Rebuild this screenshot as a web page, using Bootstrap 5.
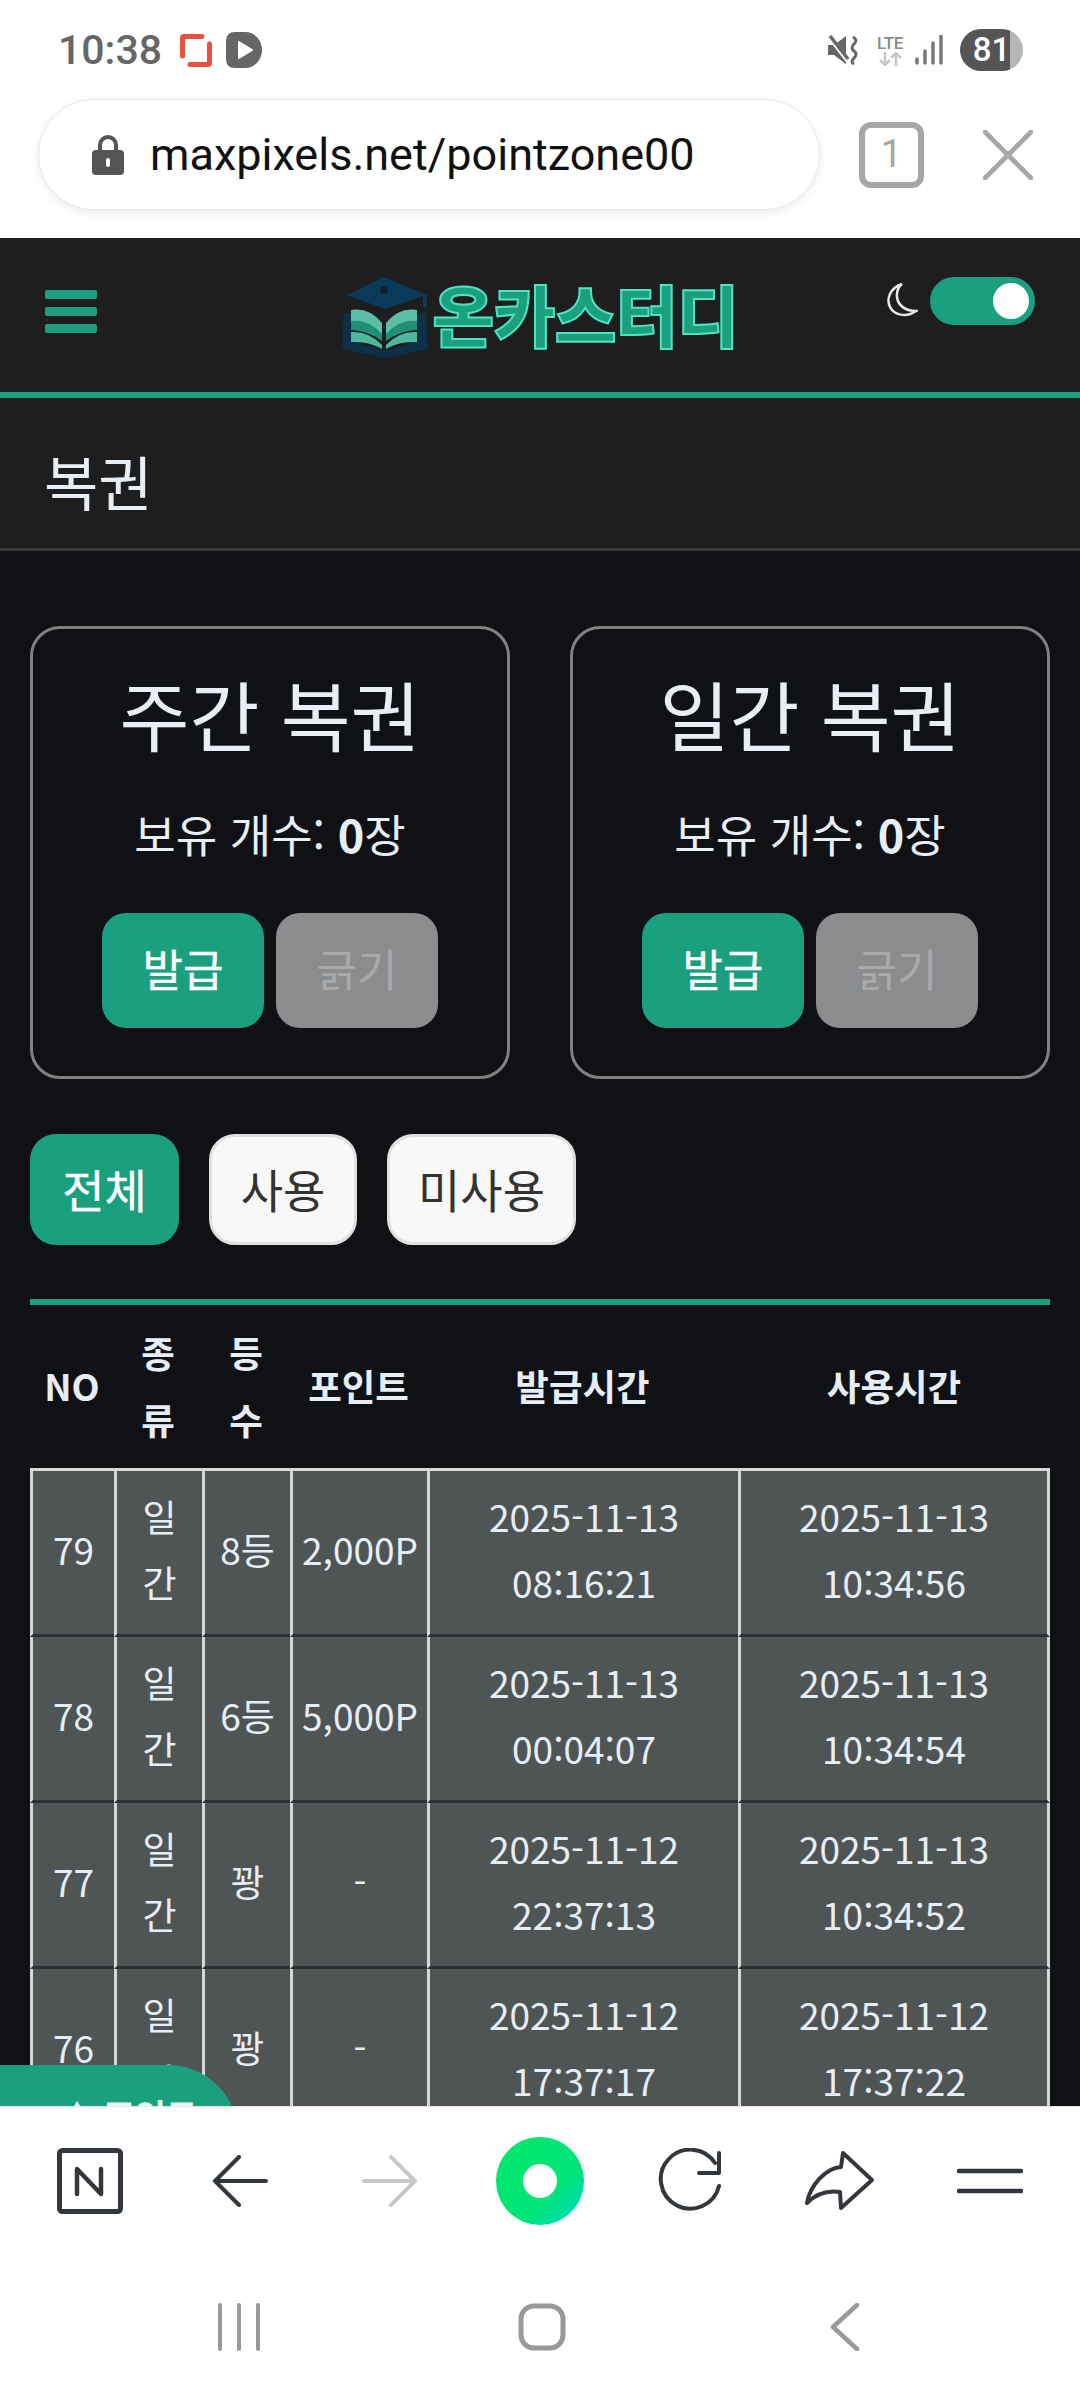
<!DOCTYPE html>
<html lang="ko">
<head>
<meta charset="utf-8">
<title>복권</title>
<link href="https://cdn.jsdelivr.net/npm/bootstrap@5.3.0/dist/css/bootstrap.min.css" rel="stylesheet">
<style>
html,body{margin:0;height:2400px;overflow:hidden;background:#fff;}
body{font-family:"Noto Sans CJK KR","Noto Sans",sans-serif;width:1080px;}
.shell{height:2400px;}
.status-bar{height:100px;padding:0 57px 0 58px;background:#fff;}
.clock{font-family:Roboto,sans-serif;font-weight:500;font-size:41px;color:#666;line-height:1;}
.red-ico{margin-left:18px;}
.play-ico{margin-left:14px;}
.lte{width:32px;line-height:1;text-align:center;}
.lte b{display:block;font-family:Roboto,sans-serif;font-size:17px;font-weight:500;color:#8a8a8a;letter-spacing:-.3px;}
.batt{width:63px;height:42px;border-radius:21px;background:linear-gradient(90deg,#555 0 79%,#b5b5b5 79% 100%);color:#fff;font-family:Roboto,sans-serif;font-weight:500;font-size:33px;line-height:42px;text-align:center;}
.url-row{height:138px;background:#fff;padding:0 47px 29px 38px;}
.url-pill{width:782px;height:111px;border-radius:56px;background:#fff;border:1px solid #e8e8e8;box-shadow:0 3px 8px rgba(0,0,0,.08);padding-left:53px;gap:26px;}
.url-text{font-family:Roboto,sans-serif;font-size:45px;color:#111;line-height:1;}
.tab-count{width:65px;height:66px;border:6px solid #a6a6a6;border-radius:12px;color:#a6a6a6;font-family:Roboto,sans-serif;font-size:38px;line-height:52px;text-align:center;margin-left:39px;}
.webview{background:#0f1115;overflow:hidden;position:relative;min-height:0;flex:1 1 0;}
.top-nav{display:grid;grid-template-columns:1fr auto 1fr;height:160px;background:#1e1e1e;border-bottom:6px solid #1ba07f;padding:0 45px;}
.burger{display:flex;flex-direction:column;gap:8px;width:52px;margin-top:52px;}
.burger span{display:block;height:9px;border-radius:2px;background:#1ba07f;}
.logo-wrap{display:flex;align-items:flex-start;gap:3px;margin-top:39px;}
.logo-text{font-weight:900;font-size:67px;line-height:76px;color:#1ba07f;-webkit-text-stroke:2px #4fe3c0;letter-spacing:-.4px;white-space:nowrap;margin-top:-2px;}
.form-switch .theme-switch{width:105px;height:48px;margin:0;background-color:#1ba07f;border:0;background-position:right 3px center;opacity:1;}
.switch-box{padding:0;min-height:0;margin:39px 0 0 0;}
.moon{margin:44px 12px 0 0;}
.sub-head{height:153px;background:#1e1e1e;border-bottom:3px solid #3a3a3a;padding:14px 0 0 44px;}
.sub-head h1{margin:0;font-size:59px;font-weight:400;color:#e8eef6;line-height:1;}
.page-body{padding:75px 30px 0;}
.ticket-grid{display:grid;grid-template-columns:480px 480px;justify-content:space-between;}
.ticket{background:transparent;border:3px solid #808080;border-radius:30px;padding:44px 0 48px;color:#e8eef6;text-align:center;}
.ticket h2{font-size:76px;font-weight:400;line-height:80px;margin:0;}
.ticket p{font-size:45px;line-height:60px;margin:51px 0 49px;}
.ticket p b{font-weight:700;}
.act-row{gap:12px;}
.act-btn{width:162px;height:115px;border:0;border-radius:24px;font-size:44px;font-weight:400;padding:0 0 6px;line-height:1;}
.act-go,.act-go:hover{background:#1ba07f;color:#fff;-webkit-text-stroke:.3px #fff;}
.act-btn.act-off,.act-btn.act-off:disabled{background:#8b8c8e;color:#a9aaab;opacity:1;}
.filter-row{margin-top:55px;gap:30px;}
.fil-btn{height:111px;border-radius:26px;font-size:46px;padding:0 0 4px;line-height:1;}
.fil-on,.fil-on:hover{width:149px;background:#1ba07f;border:0;color:#fff;-webkit-text-stroke:.3px #fff;}
.fil-off,.fil-off:hover{background:#f8f8f8;border:3px solid #e0e0e0;color:#333;}
.fil-two{width:148px;}
.fil-three{width:189px;}
.ticket-table{width:1020px;margin:54px 0 0;table-layout:fixed;border-collapse:separate;border-spacing:0;--bs-table-bg:transparent;color:#e6edf5;}
.ticket-table thead th{height:169px;border:0;border-top:6px solid #1ba07f;padding:0 14px 2px;font-size:36.500px;line-height:67px;font-weight:700;text-align:center;vertical-align:middle;color:#e6edf5;background:transparent;}
.ticket-table thead th:first-child{padding:0 0 2px;}
.ticket-table tbody td{background:#4f5454;color:#e6edf5;font-size:37px;line-height:66px;padding:12px 8px 19px;text-align:center;vertical-align:middle;border:0;border-left:3px solid #d8d8d8;border-bottom:3px solid #2b3035;box-shadow:none;}
.ticket-table tbody td.narrow{padding:12px 12px 19px;}
.ticket-table tbody tr:first-child td{border-top:3px solid #d8d8d8;}
.ticket-table tbody td:last-child{border-right:3px solid #d8d8d8;}
.c1{width:84px}.c2,.c3{width:88px}.c4{width:137px}.c5{width:311px}.c6{width:312px}
.fab{position:absolute;left:0;top:1827px;width:238px;height:120px;background:#1ba07f;border-radius:0 70px 0 0;color:#e9fff9;font-size:34px;font-weight:700;line-height:1;padding:33px 0 0 60px;}
.tool-bar{height:294px;background:#fff;border-top:1px solid #e4e4e4;}
.tools{display:grid;grid-template-columns:repeat(7,1fr);padding:30px 15px 0;height:166px;align-items:center;justify-items:center;align-content:start;}
.tools>*{display:block;}
.soft-nav{display:grid;grid-template-columns:repeat(3,303px);justify-content:center;justify-items:center;padding-left:3px;margin-top:30px;}
</style>
</head>
<body>
<div class="shell d-flex flex-column">
  <div class="status-bar d-flex flex-shrink-0 align-items-center justify-content-between">
    <div class="d-flex align-items-center">
      <span class="clock">10:38</span>
      <svg class="red-ico" width="32" height="33" viewBox="0 0 32 33"><path d="M2.500 22V4Q2.500 2.500 4 2.500H22M29.500 10V29Q29.500 30.500 28 30.500H10" fill="none" stroke="#e8513f" stroke-width="5" stroke-linecap="round"/></svg>
      <svg class="play-ico" width="36" height="36" viewBox="0 0 36 36"><path d="M9 0H19A17 18 0 0 1 19 36H9Q0 36 0 27V9Q0 0 9 0Z" fill="#666"/><path d="M13 10L26 18L13 26Z" fill="#fff" stroke="#fff" stroke-width="2" stroke-linejoin="round"/></svg>
    </div>
    <div class="d-flex align-items-center">
      <svg width="30" height="30" viewBox="0 0 30 30"><path d="M0 10H6L18 1V29L6 20H0Z" fill="#666"/><path d="M1 1L21 27" stroke="#fff" stroke-width="5"/><path d="M2 1L20 24" stroke="#666" stroke-width="3.500"/><path d="M25 2Q30 5 26 9T26 16T26 23T26 29" fill="none" stroke="#666" stroke-width="3"/></svg>
      <div class="lte ms-3"><b>LTE</b><svg class="d-block mx-auto" width="28" height="14" viewBox="0 0 28 14"><path d="M9 0V13M4 8L9 13L14 8M20 14V1M15 6L20 1L25 6" fill="none" stroke="#c6c6c6" stroke-width="2.500"/></svg></div>
      <svg class="ms-2" width="30" height="30" viewBox="0 0 30 30"><path d="M3 24V28M11 16V28M19 8V28M27 1V28" stroke="#777" stroke-width="3.500" stroke-linecap="round"/></svg>
      <div class="batt ms-3">81</div>
    </div>
  </div>

  <div class="url-row d-flex flex-shrink-0 align-items-center">
    <div class="url-pill d-flex align-items-center">
      <svg width="32" height="40" viewBox="0 0 32 40"><path d="M8 18V10A8 8 0 0 1 24 10V18" fill="none" stroke="#555" stroke-width="4"/><rect x="0" y="15" width="32" height="25" rx="4" fill="#555"/><rect x="14" y="23" width="4" height="9" rx="2" fill="#fff"/></svg>
      <span class="url-text">maxpixels.net/pointzone00</span>
    </div>
    <div class="tab-count">1</div>
    <svg class="ms-auto" width="50" height="50" viewBox="0 0 50 50"><path d="M2 2L48 48M48 2L2 48" stroke="#a9a9a9" stroke-width="5" stroke-linecap="round"/></svg>
  </div>

  <div class="webview">
    <nav class="top-nav">
      <div class="burger" aria-label="메뉴"><span></span><span></span><span></span></div>
      <div class="logo-wrap">
        <svg width="88" height="82" viewBox="0 0 88 82"><path d="M3 36H11V64L44 74L77 64V36H85L87 72L44 81L1 72Z" fill="#0c3048"/><path d="M43 0L85 18L44 32L6 18Z" fill="#0a3a5a"/><circle cx="43" cy="13" r="4" fill="#0b2030"/><path d="M84 18V30" stroke="#0a3a5a" stroke-width="4"/><path d="M10 33Q28 30 41 46V60Q28 46 10 47Z" fill="#5cc0a6"/><path d="M76 33Q58 30 45 46V60Q58 46 76 47Z" fill="#5cc0a6"/><path d="M10 44Q28 42 41 57V64Q28 54 10 53Z" fill="#1f8f77"/><path d="M76 44Q58 42 45 57V64Q58 54 76 53Z" fill="#1f8f77"/><path d="M10 55Q28 54 41 68V72Q28 64 10 65Z" fill="#4db89e"/><path d="M76 55Q58 54 45 68V72Q58 64 76 65Z" fill="#4db89e"/></svg>
        <span class="logo-text">온카스터디</span>
      </div>
      <div class="d-flex justify-content-end align-items-start">
        <svg class="moon" width="34" height="36" viewBox="0 0 34 36"><path d="M18 2C6 6 2 17 6 25C10 33 22 36 32 29C22 29 14 24 13 15C12.500 9 14 5 18 2Z" fill="none" stroke="#e8e8e8" stroke-width="2.500"/></svg>
        <div class="form-check form-switch switch-box"><input class="form-check-input theme-switch" type="checkbox" role="switch" checked aria-label="다크 모드"></div>
      </div>
    </nav>

    <header class="sub-head d-flex align-items-center"><h1>복권</h1></header>

    <main class="page-body">
      <div class="ticket-grid">
        <section class="card ticket">
          <h2>주간 복권</h2>
          <p>보유 개수: <b>0</b>장</p>
          <div class="act-row d-flex justify-content-center">
            <button class="btn act-btn act-go" type="button">발급</button>
            <button class="btn act-btn act-off" type="button" disabled>긁기</button>
          </div>
        </section>
        <section class="card ticket">
          <h2>일간 복권</h2>
          <p>보유 개수: <b>0</b>장</p>
          <div class="act-row d-flex justify-content-center">
            <button class="btn act-btn act-go" type="button">발급</button>
            <button class="btn act-btn act-off" type="button" disabled>긁기</button>
          </div>
        </section>
      </div>

      <div class="filter-row d-flex">
        <button class="btn fil-btn fil-on" type="button">전체</button>
        <button class="btn fil-btn fil-off fil-two" type="button">사용</button>
        <button class="btn fil-btn fil-off fil-three" type="button">미사용</button>
      </div>

      <table class="table ticket-table">
        <colgroup><col class="c1"><col class="c2"><col class="c3"><col class="c4"><col class="c5"><col class="c6"></colgroup>
        <thead><tr><th>NO</th><th>종류</th><th>등수</th><th>포인트</th><th>발급시간</th><th>사용시간</th></tr></thead>
        <tbody>
          <tr><td>79</td><td class="narrow">일간</td><td>8등</td><td>2,000P</td><td>2025-11-13 08:16:21</td><td>2025-11-13 10:34:56</td></tr>
          <tr><td>78</td><td class="narrow">일간</td><td>6등</td><td>5,000P</td><td>2025-11-13 00:04:07</td><td>2025-11-13 10:34:54</td></tr>
          <tr><td>77</td><td class="narrow">일간</td><td>꽝</td><td>-</td><td>2025-11-12 22:37:13</td><td>2025-11-13 10:34:52</td></tr>
          <tr><td>76</td><td class="narrow">일간</td><td>꽝</td><td>-</td><td>2025-11-12 17:37:17</td><td>2025-11-12 17:37:22</td></tr>
        </tbody>
      </table>
    </main>

    <div class="fab">▲ 포인트</div>
  </div>

  <div class="tool-bar flex-shrink-0">
    <div class="tools">
      <svg width="66" height="66" viewBox="0 0 66 66"><rect x="2.500" y="2.500" width="61" height="61" rx="3" fill="none" stroke="#32373d" stroke-width="5"/><path d="M20 46V21L44 46V21" fill="none" stroke="#32373d" stroke-width="4.500" stroke-linecap="round" stroke-linejoin="round"/></svg>
      <svg width="56" height="52" viewBox="0 0 56 52"><path d="M27 2L3 26L27 50M3 26H54" fill="none" stroke="#32373d" stroke-width="4" stroke-linecap="round" stroke-linejoin="round"/></svg>
      <svg width="56" height="52" viewBox="0 0 56 52"><path d="M29 2L53 26L29 50M53 26H2" fill="none" stroke="#c8c8c8" stroke-width="4" stroke-linecap="round" stroke-linejoin="round"/></svg>
      <svg width="88" height="88" viewBox="0 0 88 88"><defs><linearGradient id="gr" x1="0.200" y1="0.200" x2="1" y2="1"><stop offset="0" stop-color="#00e76c"/><stop offset="0.550" stop-color="#00e47a"/><stop offset="1" stop-color="#00d8cc"/></linearGradient></defs><circle cx="44" cy="44" r="44" fill="url(#gr)"/><circle cx="44" cy="44" r="17" fill="#fff"/></svg>
      <svg width="66" height="66" viewBox="0 0 66 66"><path d="M62 38A29.500 29.500 0 1 1 58 15M62 5V25H42" fill="none" stroke="#32373d" stroke-width="4" stroke-linecap="round" stroke-linejoin="round"/></svg>
      <svg width="72" height="62" viewBox="0 0 72 62"><path d="M3 53C6 35 22 18 37 17L39 3L68 30L37 58L36 42C22 40 12 44 3 53Z" fill="none" stroke="#32373d" stroke-width="4" stroke-linejoin="round"/></svg>
      <svg width="66" height="28" viewBox="0 0 66 28"><path d="M2 4H64M2 24H64" stroke="#32373d" stroke-width="4.500" stroke-linecap="round"/></svg>
    </div>
    <div class="soft-nav">
      <svg width="44" height="48" viewBox="0 0 44 48"><path d="M3 2V46M22 2V46M41 2V46" stroke="#999" stroke-width="4" stroke-linecap="round"/></svg>
      <svg width="48" height="48" viewBox="0 0 48 48"><rect x="3" y="3" width="42" height="42" rx="13" fill="none" stroke="#999" stroke-width="5"/></svg>
      <svg width="32" height="48" viewBox="0 0 32 48"><path d="M28 2L4 24L28 46" fill="none" stroke="#999" stroke-width="4.500" stroke-linecap="round" stroke-linejoin="round"/></svg>
    </div>
  </div>
</div>
<script src="https://cdn.jsdelivr.net/npm/bootstrap@5.3.0/dist/js/bootstrap.bundle.min.js"></script>
</body>
</html>
